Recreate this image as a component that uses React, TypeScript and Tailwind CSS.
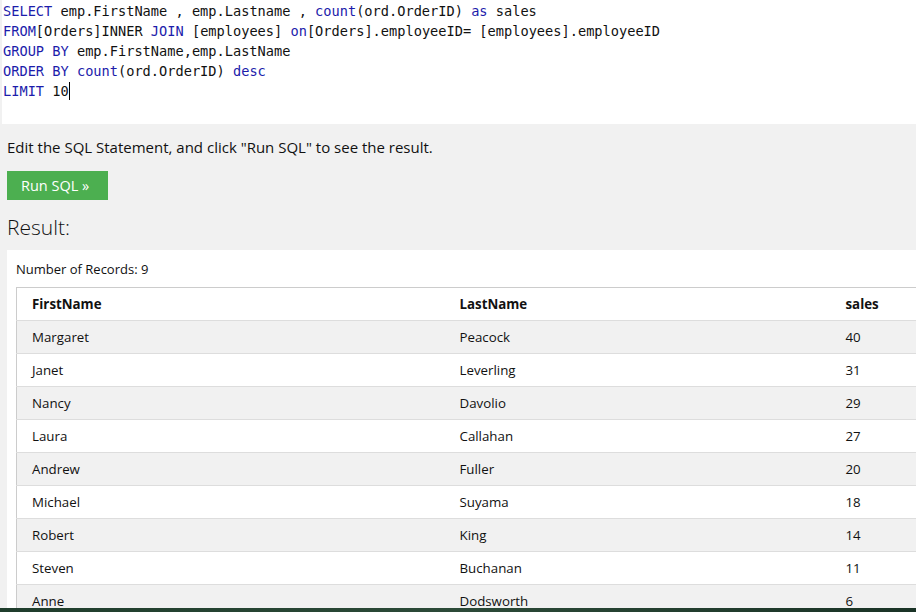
const rows = [
  ["Margaret", "Peacock", "40"],
  ["Janet", "Leverling", "31"],
  ["Nancy", "Davolio", "29"],
  ["Laura", "Callahan", "27"],
  ["Andrew", "Fuller", "20"],
  ["Michael", "Suyama", "18"],
  ["Robert", "King", "14"],
  ["Steven", "Buchanan", "11"],
  ["Anne", "Dodsworth", "6"],
];

function Kw({ children }: { children: React.ReactNode }) {
  return <span className="text-[#1c1cab]">{children}</span>;
}

export default function App() {
  return (
    <div className="h-[612px] w-[916px] overflow-hidden flex flex-col bg-[#f1f1f1] font-['Open_Sans',sans-serif] text-[#111]">
      <div className="flex-1 overflow-hidden flex flex-col">
        {/* editor */}
        <div className="ml-[2px] h-[124px] shrink-0 bg-white pl-[1px] pt-[1px] font-['DejaVu_Sans_Mono',monospace] text-[13.65px] leading-[20px] text-[#111] whitespace-pre">
          <div>
            <Kw>SELECT</Kw> emp.FirstName , emp.Lastname , <Kw>count</Kw>(ord.OrderID) <Kw>as</Kw> sales
          </div>
          <div>
            <Kw>FROM</Kw>[Orders]INNER <Kw>JOIN</Kw> [employees] <Kw>on</Kw>[Orders].employeeID= [employees].employeeID
          </div>
          <div>
            <Kw>GROUP BY</Kw> emp.FirstName,emp.LastName
          </div>
          <div>
            <Kw>ORDER BY</Kw> <Kw>count</Kw>(ord.OrderID) <Kw>desc</Kw>
          </div>
          <div className="flex items-center">
            <span>
              <Kw>LIMIT</Kw> 10
            </span>
            <span className="inline-block w-px h-[18px] bg-black" />
          </div>
        </div>

        <p className="px-[7px] pt-[13px] text-[15px] leading-[20px]">
          Edit the SQL Statement, and click "Run SQL" to see the result.
        </p>

        <div className="px-[7px] pt-[14px]">
          <button className="h-[29px] w-[101px] bg-[#4caf50] pl-[14px] text-left text-[14.5px] text-white">
            Run SQL »
          </button>
        </div>

        <h2 className="px-[7px] pt-[12px] text-[21px] leading-[30px] font-light">Result:</h2>

        <div className="ml-[7px] mt-[8px] flex-1 bg-white pl-[9px] pt-[11px]">
          <p className="text-[13px] leading-[17px]">Number of Records: 9</p>
          <table className="mt-[9px] w-[940px] border-collapse border border-[#ccc] text-[13.3px] text-left">
            <thead>
              <tr className="h-[33px] bg-white">
                <th className="w-[427px] pl-[15px] pt-[1px] font-bold">FirstName</th>
                <th className="w-[386px] pl-[16px] pt-[1px] font-bold">LastName</th>
                <th className="pl-[16px] pt-[1px] font-bold">sales</th>
              </tr>
            </thead>
            <tbody>
              {rows.map((r, i) => (
                <tr
                  key={r[0]}
                  className={
                    "h-[33px] border-t border-[#ddd] " +
                    (i % 2 === 0 ? "bg-[#f1f1f1]" : "bg-white")
                  }
                >
                  <td className="pl-[15px] pt-[1px]">{r[0]}</td>
                  <td className="pl-[16px] pt-[1px]">{r[1]}</td>
                  <td className="pl-[16px] pt-[1px]">{r[2]}</td>
                </tr>
              ))}
            </tbody>
          </table>
        </div>
      </div>
      <div className="h-[4px] shrink-0 bg-gradient-to-r from-[#1f3d2c] via-[#2c4a38] to-[#1a3326]" />
    </div>
  );
}
